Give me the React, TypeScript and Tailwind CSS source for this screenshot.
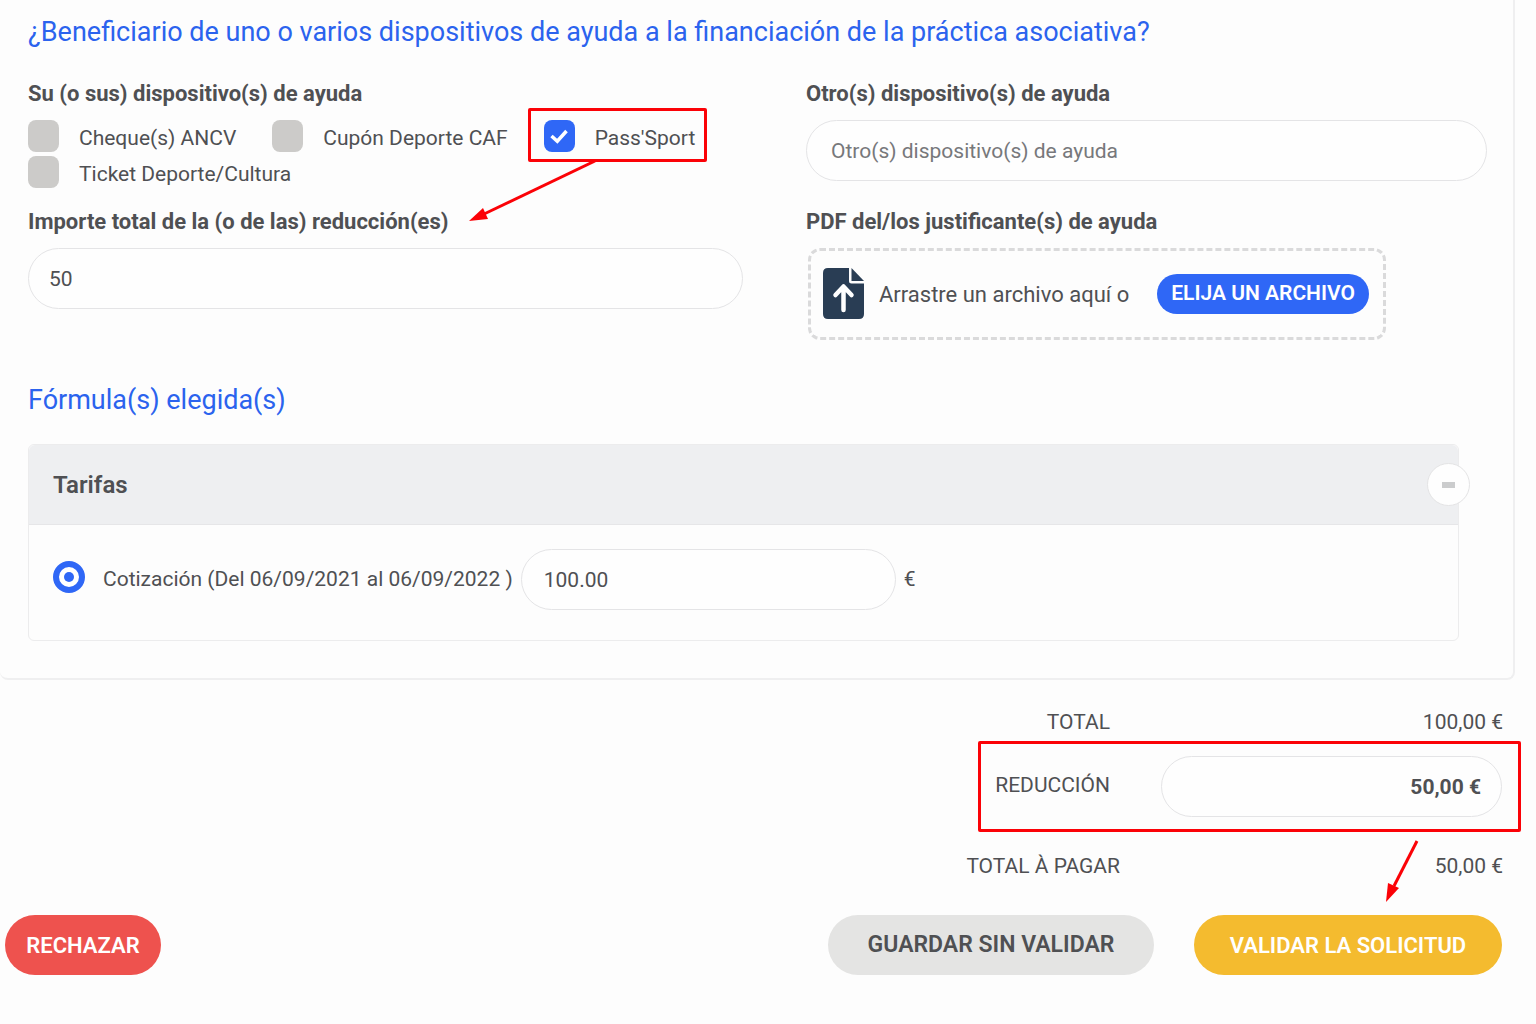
import React, { useState } from "react";

const fieldClass =
  "w-full h-[61px] rounded-full border border-[#e4e4e6] bg-[#fefefe] text-[21px] leading-7 text-[#4f5053] placeholder:text-[#77787b] outline-none";

function CheckOption({
  id,
  label,
  defaultChecked = false,
  children,
}: {
  id: string;
  label: string;
  defaultChecked?: boolean;
  children?: React.ReactNode;
}) {
  return (
    <div className="relative flex items-start gap-5">
      <span className="grid place-items-center">
        <input
          id={id}
          type="checkbox"
          defaultChecked={defaultChecked}
          className="peer col-start-1 row-start-1 h-8 w-[31px] appearance-none rounded-lg bg-[#cccbc9] checked:bg-[#2f67f6]"
        />
        <svg
          viewBox="0 0 20 16"
          className="pointer-events-none invisible col-start-1 row-start-1 h-4 w-5 peer-checked:visible"
          fill="none"
          stroke="#fff"
          strokeWidth="3.5"
          aria-hidden="true"
        >
          <path d="M2.5 8 L8.3 13.2 L17.5 3" />
        </svg>
      </span>
      <label htmlFor={id} className="text-[21px] leading-9 whitespace-nowrap">
        {label}
      </label>
      {children}
    </div>
  );
}

function FileUploadIcon() {
  return (
    <svg viewBox="0 0 42 52" className="h-[52px] w-[42px] shrink-0" aria-hidden="true">
      <path
        d="M5 0 H26 V13 Q26 15.5 28.5 15.5 H41 V46 Q41 51 36 51 H5 Q0 51 0 46 V5 Q0 0 5 0 Z"
        fill="#293d54"
      />
      <path d="M28.5 0 L41 13 H28.5 Z" fill="#293d54" />
      <path
        d="M20.5 42 V20 M12.5 27 L20.5 18.5 L28.5 27"
        fill="none"
        stroke="#fff"
        strokeWidth="4.5"
        strokeLinecap="round"
        strokeLinejoin="round"
      />
    </svg>
  );
}

function AidSection() {
  return (
    <section>
      <h2 className="text-[27px] leading-10 text-[#2b63ee]">
        ¿Beneficiario de uno o varios dispositivos de ayuda a la financiación de la práctica asociativa?
      </h2>
      <div className="mt-7 grid grid-cols-[715fr_681fr] gap-[63px]">
        <div className="flex flex-col">
          <h3 className="text-[22px] leading-7 font-bold">Su (o sus) dispositivo(s) de ayuda</h3>
          <div className="mt-3 flex flex-wrap gap-x-9">
            <CheckOption id="ancv" label="Cheque(s) ANCV" />
            <CheckOption id="caf" label="Cupón Deporte CAF" />
            <CheckOption id="pass" label="Pass'Sport" defaultChecked>
              <span className="pointer-events-none absolute -top-3 -right-3 -bottom-1.5 -left-4 rounded-xs border-3 border-[#fb0207]" />
              <svg
                viewBox="0 0 130 64"
                className="pointer-events-none absolute top-10 -left-[76px] h-16 w-[130px]"
                aria-hidden="true"
              >
                <path d="M127 1 L14 55" stroke="#fb0207" strokeWidth="3" />
                <path d="M1 61 L15 48 L20 59 Z" fill="#fb0207" />
              </svg>
            </CheckOption>
            <CheckOption id="ticket" label="Ticket Deporte/Cultura" />
          </div>
          <label htmlFor="importe" className="mt-4 text-[22px] leading-7 font-bold">
            Importe total de la (o de las) reducción(es)
          </label>
          <input id="importe" type="text" defaultValue="50" className={`${fieldClass} mt-3 px-5`} />
        </div>
        <div className="flex flex-col">
          <label htmlFor="otros" className="text-[22px] leading-7 font-bold">
            Otro(s) dispositivo(s) de ayuda
          </label>
          <input
            id="otros"
            type="text"
            placeholder="Otro(s) dispositivo(s) de ayuda"
            className={`${fieldClass} mt-3 px-6`}
          />
          <h3 className="mt-[27px] text-[22px] leading-7 font-bold">PDF del/los justificante(s) de ayuda</h3>
          <div className="mt-3 ml-0.5 flex h-[92px] items-center self-start rounded-xl border-3 border-dashed border-[#dadadb] pr-3.5 pl-3">
            <FileUploadIcon />
            <span className="ml-3.5 text-[22px] whitespace-nowrap">Arrastre un archivo aquí o</span>
            <button
              type="button"
              className="ml-7 h-10 rounded-full bg-[#2f67f6] px-3.5 text-[21px] font-semibold whitespace-nowrap text-white"
            >
              ELIJA UN ARCHIVO
            </button>
          </div>
        </div>
      </div>
    </section>
  );
}

function FormulaSection() {
  const [open, setOpen] = useState(true);
  return (
    <section className="mt-10">
      <h2 className="text-[27px] leading-10 text-[#2b63ee]">Fórmula(s) elegida(s)</h2>
      <div className="mt-6 mr-7 rounded-md border border-[#ececed]">
        <div className="relative flex h-20 items-center rounded-t-md border-b border-[#e6e6e8] bg-[#eeeff1] pl-6">
          <h3 className="text-2xl font-semibold">Tarifas</h3>
          <button
            type="button"
            aria-label="Contraer tarifas"
            aria-expanded={open}
            onClick={() => setOpen(!open)}
            className="absolute top-[18px] -right-3 grid size-[43px] place-items-center rounded-full border border-[#e4e4e5] bg-[#fefefe]"
          >
            <span className="h-1.5 w-[13px] bg-[#cbcccd]" />
          </button>
        </div>
        {open && (
          <div className="flex items-center px-6 pt-6 pb-[30px]">
            <input
              id="cotizacion"
              type="radio"
              name="tarifa"
              defaultChecked
              className="mb-1.5 grid size-8 shrink-0 appearance-none place-content-center rounded-full border-6 border-[#2f67f6] bg-white before:size-2.5 before:rounded-full before:bg-[#2f67f6]"
            />
            <label htmlFor="cotizacion" className="ml-[18px] text-[21px] whitespace-nowrap">
              Cotización (Del 06/09/2021 al 06/09/2022 )
            </label>
            <input
              type="text"
              aria-label="Importe de la cotización"
              defaultValue="100.00"
              className={`${fieldClass} ml-2 max-w-[375px] px-[22px]`}
            />
            <span className="ml-2 text-[21px]">€</span>
          </div>
        )}
      </div>
    </section>
  );
}

function Totals() {
  return (
    <section className="ml-auto w-[543px] text-[21px] leading-7">
      <div className="flex justify-between pr-[18px]">
        <span className="w-[132px] text-right">TOTAL</span>
        <span>100,00 €</span>
      </div>
      <div className="mt-[5px] flex h-[91px] items-center justify-between rounded-xs border-3 border-[#fb0207] pr-4">
        <label htmlFor="reduccion" className="w-[129px] pb-1 text-right">
          REDUCCIÓN
        </label>
        <div className="w-[341px]">
          <input
            id="reduccion"
            type="text"
            defaultValue="50,00 €"
            className={`${fieldClass} px-5 text-right font-bold`}
          />
        </div>
      </div>
      <div className="relative mt-5 flex justify-between pr-[18px]">
        <span className="-ml-3 w-[154px] text-right whitespace-nowrap">TOTAL À PAGAR</span>
        <span>50,00 €</span>
        <svg
          viewBox="0 0 34 64"
          className="pointer-events-none absolute -top-3 right-[102px] h-16 w-[34px]"
          aria-hidden="true"
        >
          <path d="M32 1 L9 46" stroke="#fb0207" strokeWidth="3" />
          <path d="M1 62 L3 43 L14 48 Z" fill="#fb0207" />
        </svg>
      </div>
    </section>
  );
}

export default function App() {
  return (
    <main className="min-h-screen bg-[#fdfdfd] font-['Roboto',sans-serif] text-[#4f5053]">
      <div className="mr-[21px] rounded-b-lg border-r-2 border-b-2 border-[#efeff0] pt-3 pr-[26px] pb-[37px] pl-7">
        <AidSection />
        <FormulaSection />
      </div>
      <div className="pt-7 pr-[15px]">
        <Totals />
      </div>
      <div className="flex items-center pt-[35px] pr-[34px] pb-12 pl-[5px] text-[22px] font-semibold">
        <button type="button" className="h-[60px] w-[156px] rounded-full bg-[#ee524e] text-white">
          RECHAZAR
        </button>
        <button type="button" className="ml-auto h-[60px] w-[326px] rounded-full bg-[#e4e4e3] text-[23px]">
          GUARDAR SIN VALIDAR
        </button>
        <button type="button" className="ml-10 h-[60px] w-[308px] rounded-full bg-[#f4bb2f] text-white">
          VALIDAR LA SOLICITUD
        </button>
      </div>
    </main>
  );
}
